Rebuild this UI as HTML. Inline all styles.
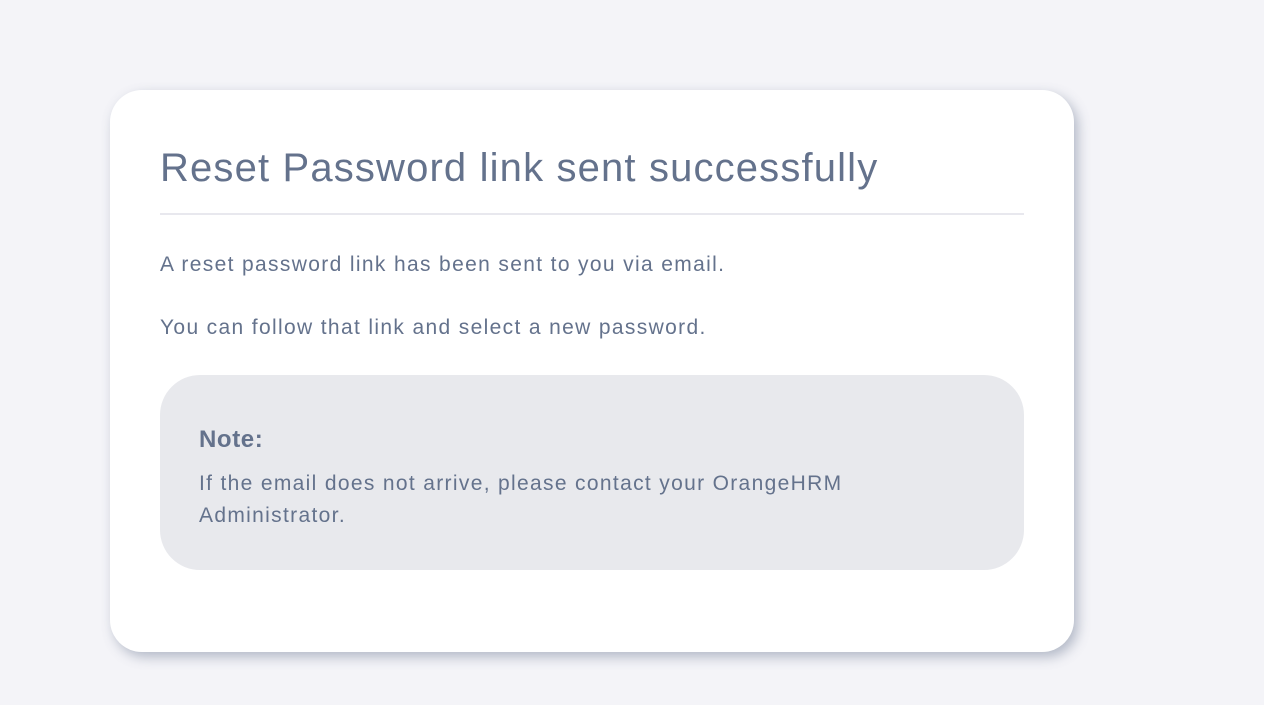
<!DOCTYPE html>
<html><head><style>
html,body{margin:0;padding:0;width:1264px;height:705px;background:#f4f4f8;overflow:hidden;font-family:"Liberation Sans",sans-serif;color:#64728c;}
.card{position:absolute;left:110px;top:90px;width:964px;height:562px;background:#fff;border-radius:32px;box-shadow:4px 5px 12px rgba(100,114,140,0.45);}
h1{position:absolute;left:50px;top:56px;margin:0;font-weight:normal;font-size:40px;letter-spacing:1.15px;white-space:nowrap;}
.hr{position:absolute;left:50px;top:123px;width:864px;height:2px;background:#e8e8ee;}
p{position:absolute;left:50px;margin:0;font-size:21px;white-space:nowrap;letter-spacing:1.35px;}
.note{position:absolute;left:50px;top:285px;width:864px;height:195px;background:#e8e9ed;border-radius:40px;}
.note b{position:absolute;left:39px;top:51px;font-size:24px;letter-spacing:0.6px;}
.note span{position:absolute;left:39px;top:93px;font-size:21px;line-height:32px;width:760px;letter-spacing:1.33px;}
</style></head><body>
<div class="card">
<h1>Reset Password link sent successfully</h1>
<div class="hr"></div>
<p style="top:163px">A reset password link has been sent to you via email.</p>
<p style="top:226px">You can follow that link and select a new password.</p>
<div class="note"><b>Note:</b><span>If the email does not arrive, please contact your OrangeHRM<br>Administrator.</span></div>
</div>
</body></html>
